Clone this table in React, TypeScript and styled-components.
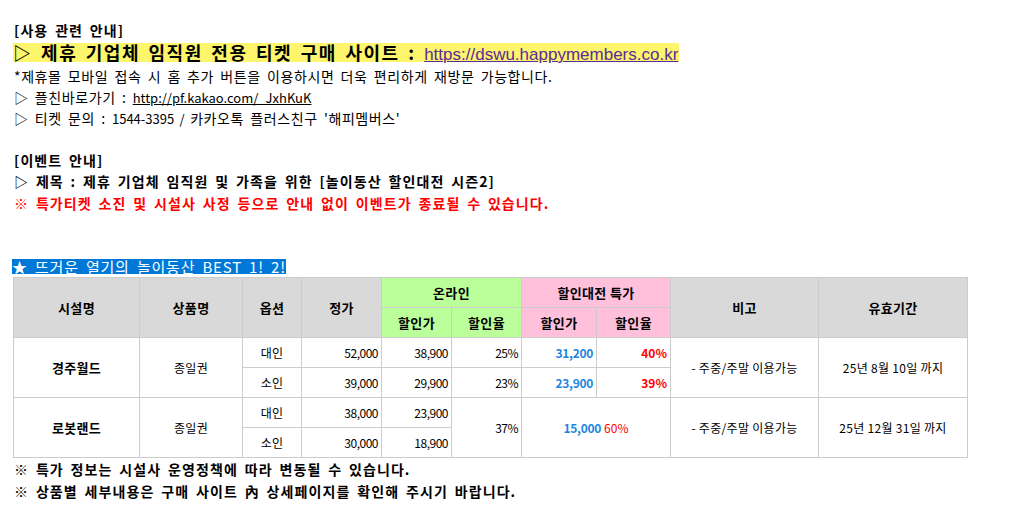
import styled, { createGlobalStyle } from "styled-components";

const GlobalStyle = createGlobalStyle`
  body {
    margin: 0;
    background: #fff;
    font-family: "Noto Sans CJK KR", "Noto Sans", sans-serif;
    color: #000;
  }
`;

const Page = styled.div`
  padding: 20px 0 0 14px;
  display: flex;
  flex-direction: column;
  align-items: flex-start;
`;

const Line = styled.div<{ $bold?: boolean; $size?: number; $color?: string; $h?: number }>`
  font-size: ${(p) => p.$size ?? 14}px;
  font-weight: ${(p) => (p.$bold ? 700 : 400)};
  color: ${(p) => p.$color ?? "#000"};
  height: ${(p) => p.$h ?? 21}px;
  line-height: ${(p) => p.$h ?? 21}px;
  white-space: nowrap;
  letter-spacing: ${(p) => (p.$bold ? 1.1 : 0.6)}px;
  word-spacing: 2.5px;
`;

const Heading = styled.div`
  height: 25px;
  line-height: 25px;
  white-space: nowrap;
`;

const Highlight = styled.span`
  display: inline-block;
  background: #fdf56b;
  height: 19px;
  line-height: 19px;
  margin-left: -1px;
  padding-right: 1px;
  font-size: 18px;
  font-weight: 700;
  letter-spacing: 1.5px;
  word-spacing: 3px;
`;

const SiteLink = styled.a`
  color: #5b2a9b;
  font-family: "Liberation Sans", Arial, sans-serif;
  font-size: 17px;
  font-weight: 400;
  letter-spacing: 0;
  word-spacing: 0;
  text-decoration: underline;
`;

const PlainLink = styled.a`
  color: #000;
  font-size: 13px;
  letter-spacing: 0;
  text-decoration: underline;
`;

const Ascii = styled.span`
  font-size: 13px;
  letter-spacing: 0;
`;

const Spacer = styled.div<{ $h: number }>`
  height: ${(p) => p.$h}px;
`;

const Banner = styled.span`
  display: inline-block;
  background: #0078d7;
  color: #fff;
  font-size: 15px;
  height: 15px;
  line-height: 15px;
  letter-spacing: 0.8px;
  word-spacing: 3px;
  margin-left: -2px;
`;

const Table = styled.table`
  border-collapse: collapse;
  margin-left: -1px;
  margin-top: 3px;
  table-layout: fixed;
  width: 955px;
  font-size: 12px;
`;

const Th = styled.th<{ $bg?: string }>`
  background: ${(p) => p.$bg ?? "#d9d9d9"};
  border: 1px solid #cccccc;
  height: 29px;
  padding: 0;
  font-size: 13px;
  font-weight: 700;
  text-align: center;
  letter-spacing: 0.3px;
`;

const Td = styled.td<{ $align?: string; $bold?: boolean }>`
  border: 1px solid #cccccc;
  height: 29px;
  padding: 0 3px;
  text-align: ${(p) => p.$align ?? "center"};
  font-weight: ${(p) => (p.$bold ? 700 : 400)};
  font-size: ${(p) => (p.$bold ? 13 : 12)}px;
  white-space: nowrap;
  letter-spacing: ${(p) => (p.$align === "right" ? -0.5 : 0.3)}px;
  word-spacing: 0;
`;

const Blue = styled.span`
  color: #1e86e0;
  font-weight: 700;
  font-size: 12px;
  letter-spacing: -0.3px;
`;

const Red = styled.span<{ $light?: boolean }>`
  color: #ff0000;
  font-weight: ${(p) => (p.$light ? 400 : 700)};
  font-size: 12px;
  letter-spacing: 0;
  margin-left: ${(p) => (p.$light ? 3 : 0)}px;
`;

const widths = [126, 103, 59, 80, 70, 70, 75, 74, 148, 149];

const gyeongju = [
  { o: "대인", price: "52,000", on: "38,900", rate: "25%", sp: "31,200", sr: "40%" },
  { o: "소인", price: "39,000", on: "29,900", rate: "23%", sp: "23,900", sr: "39%" },
];

export default function App() {
  return (
    <Page>
      <GlobalStyle />
      <Line $bold>[사용 관련 안내]</Line>
      <Heading>
        <Highlight>
          ▷ 제휴 기업체 임직원 전용 티켓 구매 사이트 :{" "}
          <SiteLink href="#">https://dswu.happymembers.co.kr</SiteLink>
        </Highlight>
      </Heading>
      <Line>*제휴몰 모바일 접속 시 홈 추가 버튼을 이용하시면 더욱 편리하게 재방문 가능합니다.</Line>
      <Line>
        ▷ 플친바로가기 : <PlainLink href="#">http://pf.kakao.com/_JxhKuK</PlainLink>
      </Line>
      <Line>
        ▷ 티켓 문의 : <Ascii>1544-3395 / </Ascii>카카오톡 플러스친구 '해피멤버스'
      </Line>
      <Spacer $h={21} />
      <Line $bold>[이벤트 안내]</Line>
      <Line $bold>▷ 제목 : 제휴 기업체 임직원 및 가족을 위한 [놀이동산 할인대전 시즌2]</Line>
      <Line $bold $color="#ff0000" $h={23}>
        ※ 특가티켓 소진 및 시설사 사정 등으로 안내 없이 이벤트가 종료될 수 있습니다.
      </Line>
      <Spacer $h={44} />
      <Line $h={15}>
        <Banner>★ 뜨거운 열기의 놀이동산 BEST 1! 2!</Banner>
      </Line>
      <Table>
        <colgroup>
          {widths.map((w, i) => (
            <col key={i} style={{ width: w }} />
          ))}
        </colgroup>
        <thead>
          <tr>
            <Th rowSpan={2}>시설명</Th>
            <Th rowSpan={2}>상품명</Th>
            <Th rowSpan={2}>옵션</Th>
            <Th rowSpan={2}>정가</Th>
            <Th colSpan={2} $bg="#bbff9b">온라인</Th>
            <Th colSpan={2} $bg="#ffc0dc">할인대전 특가</Th>
            <Th rowSpan={2}>비고</Th>
            <Th rowSpan={2}>유효기간</Th>
          </tr>
          <tr>
            <Th $bg="#bbff9b">할인가</Th>
            <Th $bg="#bbff9b">할인율</Th>
            <Th $bg="#ffc0dc">할인가</Th>
            <Th $bg="#ffc0dc">할인율</Th>
          </tr>
        </thead>
        <tbody>
          {gyeongju.map((o, i) => (
            <tr key={o.o}>
              {i === 0 && (
                <>
                  <Td rowSpan={2} $bold>경주월드</Td>
                  <Td rowSpan={2}>종일권</Td>
                </>
              )}
              <Td>{o.o}</Td>
              <Td $align="right">{o.price}</Td>
              <Td $align="right">{o.on}</Td>
              <Td $align="right">{o.rate}</Td>
              <Td $align="right"><Blue>{o.sp}</Blue></Td>
              <Td $align="right"><Red>{o.sr}</Red></Td>
              {i === 0 && (
                <>
                  <Td rowSpan={2}>- 주중/주말 이용가능</Td>
                  <Td rowSpan={2}>25년 8월 10일 까지</Td>
                </>
              )}
            </tr>
          ))}
          <tr>
            <Td rowSpan={2} $bold>로봇랜드</Td>
            <Td rowSpan={2}>종일권</Td>
            <Td>대인</Td>
            <Td $align="right">38,000</Td>
            <Td $align="right">23,900</Td>
            <Td rowSpan={2} $align="right">37%</Td>
            <Td rowSpan={2} colSpan={2}>
              <Blue>15,000</Blue><Red $light>60%</Red>
            </Td>
            <Td rowSpan={2}>- 주중/주말 이용가능</Td>
            <Td rowSpan={2}>25년 12월 31일 까지</Td>
          </tr>
          <tr>
            <Td>소인</Td>
            <Td $align="right">30,000</Td>
            <Td $align="right">18,900</Td>
          </tr>
        </tbody>
      </Table>
      <Line $bold $h={22}>※ 특가 정보는 시설사 운영정책에 따라 변동될 수 있습니다.</Line>
      <Line $bold $h={22}>※ 상품별 세부내용은 구매 사이트 內 상세페이지를 확인해 주시기 바랍니다.</Line>
    </Page>
  );
}
